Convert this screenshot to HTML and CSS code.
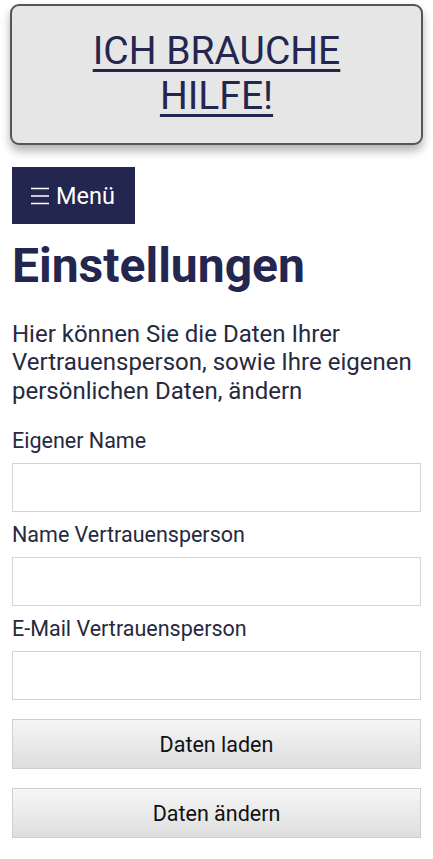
FILE: index.html
```html
<!DOCTYPE html>
<html lang="de">
<head>
<meta charset="utf-8">
<title>Einstellungen</title>
<link rel="stylesheet" href="styles.css">
</head>
<body>
<div class="help-box"><a href="#" class="help-link">ICH BRAUCHE HILFE!</a></div>
<main class="content">
  <button class="menu-btn" type="button">
    <svg class="menu-icon" width="18" height="18" viewBox="0 0 18 18" aria-hidden="true">
      <path d="M0 1.5h18M0 9h18M0 16.5h18" stroke="#ffffff" stroke-width="1.6" fill="none"/>
    </svg>
    <span>Menü</span>
  </button>
  <h1 class="title">Einstellungen</h1>
  <p class="intro">Hier können Sie die Daten Ihrer Vertrauensperson, sowie Ihre eigenen persönlichen Daten, ändern</p>
  <form class="form">
    <label class="field-label" for="own">Eigener Name</label>
    <input class="field-input" id="own" type="text">
    <label class="field-label" for="trust">Name Vertrauensperson</label>
    <input class="field-input" id="trust" type="text">
    <label class="field-label" for="mail">E-Mail Vertrauensperson</label>
    <input class="field-input" id="mail" type="email">
    <button class="action-btn first" type="button">Daten laden</button>
    <button class="action-btn" type="button">Daten ändern</button>
  </form>
</main>
</body>
</html>
```

FILE: styles.css
```css
* { box-sizing: border-box; }
html, body { margin: 0; padding: 0; background: #ffffff; }
body {
  font-family: Roboto, "Liberation Sans", Arial, sans-serif;
  color: #23264f;
}
.help-box {
  margin: 4px 10px 0 10px;
  border: 2px solid #555555;
  border-radius: 9px;
  background: #e6e6e6;
  box-shadow: 0 6px 10px rgba(0,0,0,0.3);
  padding: 23px 40px 24px;
  text-align: center;
}
.help-link {
  font-size: 39px;
  line-height: 45px;
  color: #23264f;
  text-decoration: underline;
  text-decoration-thickness: 3px;
  text-underline-offset: 5px;
}
.content {
  padding: 22px 12px 0 12px;
}
.menu-btn {
  display: inline-flex;
  align-items: center;
  gap: 7px;
  height: 57px;
  width: 123px;
  padding: 0 0 0 19px;
  border: none;
  background: #23264f;
  color: #ffffff;
  font-family: Roboto, "Liberation Sans", Arial, sans-serif;
  font-size: 23.5px;
}
.menu-icon { display: block; }
.title {
  margin: 13px 0 0 0;
  font-size: 48px;
  line-height: 57.6px;
  font-weight: 700;
  color: #23264f;
}
.intro {
  margin: 25px 0 0 0;
  font-size: 24px;
  line-height: 28.5px;
  color: #262940;
}
.form {
  display: flex;
  flex-direction: column;
  margin-top: 23px;
}
.field-label {
  font-size: 21.5px;
  line-height: 25px;
  margin: 0 0 10px 0;
  color: #262940;
}
.field-input + .field-label { margin-top: 10px; }
.field-input {
  height: 49px;
  width: 100%;
  border: 1px solid #d4d4d4;
  background: #ffffff;
  font-size: 20px;
}
.action-btn {
  height: 50px;
  width: 100%;
  margin-top: 19px;
  border: 1px solid #cfcfcf;
  background: linear-gradient(#f6f6f6, #dedede);
  color: #111111;
  font-family: Roboto, "Liberation Sans", Arial, sans-serif;
  font-size: 21.5px;
}
```
